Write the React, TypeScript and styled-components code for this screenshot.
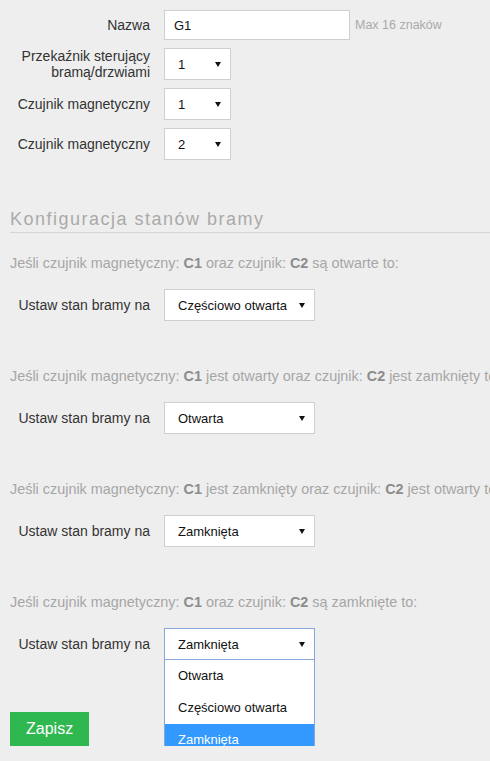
import React from 'react';
import styled, { createGlobalStyle } from 'styled-components';

const GlobalStyle = createGlobalStyle`
  html, body {
    margin: 0;
    padding: 0;
    background: #eeeeee;
    overflow: hidden;
  }
  body {
    font-family: "Liberation Sans", Arial, sans-serif;
    font-size: 14px;
    color: #333;
  }
`;

const Page = styled.div`
  width: 600px;
  padding-top: 10px;
  box-sizing: border-box;
`;

const Form = styled.div`
  display: flex;
  flex-direction: column;
  gap: 8px;
  padding-left: 10px;
`;

const Row = styled.div`
  display: grid;
  grid-template-columns: 140px auto;
  column-gap: 14px;
  align-items: center;
  justify-items: start;
`;

const Label = styled.label`
  justify-self: end;
  text-align: right;
  line-height: 16px;
  color: #333;
`;

const Field = styled.div`
  display: flex;
  align-items: center;
  gap: 5px;
`;

const TextInput = styled.input`
  width: 186px;
  height: 30px;
  box-sizing: border-box;
  border: 1px solid #cfcfcf;
  background: #fff;
  padding: 0 9px;
  font-family: inherit;
  font-size: 13px;
  color: #111;
  outline: none;
`;

const Hint = styled.span`
  font-size: 12.5px;
  color: #aaaaaa;
`;

const SelectWrap = styled.div`
  position: relative;
`;

const SelectBox = styled.div<{ $width: number; $open?: boolean }>`
  width: ${(p) => p.$width}px;
  height: 32px;
  box-sizing: border-box;
  display: flex;
  align-items: center;
  justify-content: space-between;
  padding: 0 9px 0 13px;
  background: #fff;
  border: 1px solid ${(p) => (p.$open ? '#86a6da' : '#cfcfcf')};
  color: #111;
  font-size: 13px;
  cursor: default;
`;

const Arrow = styled.span`
  width: 0;
  height: 0;
  border-left: 3px solid transparent;
  border-right: 3px solid transparent;
  border-top: 5px solid #111;
`;

const Dropdown = styled.ul`
  position: absolute;
  top: 100%;
  left: 0;
  right: 0;
  margin: 0;
  padding: 0;
  list-style: none;
  background: #fff;
  border: 1px solid #86a6da;
  border-top: none;
  z-index: 2;
`;

const Option = styled.li<{ $active?: boolean }>`
  height: 32px;
  line-height: 32px;
  padding-left: 13px;
  font-size: 13px;
  color: ${(p) => (p.$active ? '#fff' : '#111')};
  background: ${(p) => (p.$active ? '#3399ff' : 'transparent')};
`;

const Heading = styled.h2`
  margin: 48px 0 0 10px;
  padding-bottom: 2px;
  font-size: 18px;
  line-height: 22px;
  font-weight: normal;
  letter-spacing: 1.5px;
  color: #aaaaaa;
  border-bottom: 1px solid #d6d6d6;
`;

const Sections = styled.div`
  display: flex;
  flex-direction: column;
  gap: 45px;
  margin-top: 20px;
  padding-left: 10px;
`;

const Section = styled.div`
  display: flex;
  flex-direction: column;
  gap: 16px;
`;

const Info = styled.p`
  margin: 0;
  line-height: 20px;
  font-size: 14.4px;
  color: #a6a6a6;
  white-space: nowrap;

  b {
    color: #8c8c8c;
  }
`;

const SaveButton = styled.button`
  margin: 52px 0 0 10px;
  height: 34px;
  padding: 0 16px;
  border: none;
  background: #2fb84f;
  color: #fff;
  font-family: inherit;
  font-size: 16px;
  cursor: pointer;
`;

const stateOptions = ['Otwarta', 'Częściowo otwarta', 'Zamknięta'];

const Select: React.FC<{ value: string; width: number; open?: boolean }> = ({ value, width, open }) => (
  <SelectWrap>
    <SelectBox $width={width} $open={open}>
      <span>{value}</span>
      <Arrow />
    </SelectBox>
    {open && (
      <Dropdown>
        {stateOptions.map((o) => (
          <Option key={o} $active={o === value}>
            {o}
          </Option>
        ))}
      </Dropdown>
    )}
  </SelectWrap>
);

const rules = [
  { c1: '', c2: 'są otwarte to:', value: 'Częściowo otwarta' },
  { c1: 'jest otwarty ', c2: 'jest zamknięty to:', value: 'Otwarta' },
  { c1: 'jest zamknięty ', c2: 'jest otwarty to:', value: 'Zamknięta' },
  { c1: '', c2: 'są zamknięte to:', value: 'Zamknięta', open: true },
];

export default function App() {
  return (
    <>
      <GlobalStyle />
      <Page>
        <Form>
          <Row>
            <Label>Nazwa</Label>
            <Field>
              <TextInput defaultValue="G1" />
              <Hint>Max 16 znaków</Hint>
            </Field>
          </Row>
          <Row>
            <Label>
              Przekaźnik sterujący
              <br />
              bramą/drzwiami
            </Label>
            <Select value="1" width={67} />
          </Row>
          <Row>
            <Label>Czujnik magnetyczny</Label>
            <Select value="1" width={67} />
          </Row>
          <Row>
            <Label>Czujnik magnetyczny</Label>
            <Select value="2" width={67} />
          </Row>
        </Form>

        <Heading>Konfiguracja stanów bramy</Heading>

        <Sections>
          {rules.map((r, i) => (
            <Section key={i}>
              <Info>
                Jeśli czujnik magnetyczny: <b>C1</b> {r.c1}oraz czujnik: <b>C2</b> {r.c2}
              </Info>
              <Row>
                <Label>Ustaw stan bramy na</Label>
                <Select value={r.value} width={151} open={r.open} />
              </Row>
            </Section>
          ))}
        </Sections>

        <SaveButton>Zapisz</SaveButton>
      </Page>
    </>
  );
}
